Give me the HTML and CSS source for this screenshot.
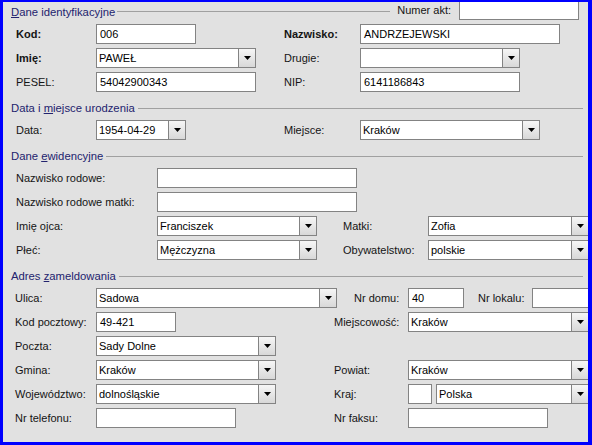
FILE: index.html
```html
<!DOCTYPE html>
<html>
<head>
<meta charset="utf-8">
<link rel="stylesheet" href="styles.css">
</head>
<body>
<div class="frame">
  <div class="head first">
    <span class="legend"><u>D</u>ane identyfikacyjne</span><span class="rule"></span>
    <span class="lbl akt">Numer akt:</span><div class="box w120"></div>
  </div>
  <div class="grid g1">
    <span class="lbl b">Kod:</span><div class="box w100">006</div>
    <span class="lbl b">Nazwisko:</span><div class="box w200">ANDRZEJEWSKI</div>
    <span class="lbl b">Imię:</span><div class="combo w160"><span class="val">PAWEŁ</span><span class="btn"><svg width="7" height="4" viewBox="0 0 7 4"><polygon points="0,0 7,0 3.5,4" fill="#000"/></svg></span></div>
    <span class="lbl">Drugie:</span><div class="combo w160"><span class="val"></span><span class="btn"><svg width="7" height="4" viewBox="0 0 7 4"><polygon points="0,0 7,0 3.5,4" fill="#000"/></svg></span></div>
    <span class="lbl">PESEL:</span><div class="box w160">54042900343</div>
    <span class="lbl">NIP:</span><div class="box w160">6141186843</div>
  </div>

  <div class="head">
    <span class="legend">Data i <u>m</u>iejsce urodzenia</span><span class="rule"></span>
  </div>
  <div class="grid g1">
    <span class="lbl">Data:</span><div class="combo w90"><span class="val">1954-04-29</span><span class="btn"><svg width="7" height="4" viewBox="0 0 7 4"><polygon points="0,0 7,0 3.5,4" fill="#000"/></svg></span></div>
    <span class="lbl">Miejsce:</span><div class="combo w180"><span class="val">Kraków</span><span class="btn"><svg width="7" height="4" viewBox="0 0 7 4"><polygon points="0,0 7,0 3.5,4" fill="#000"/></svg></span></div>
  </div>

  <div class="head">
    <span class="legend">Dane <u>e</u>widencyjne</span><span class="rule"></span>
  </div>
  <div class="grid g3">
    <span class="lbl">Nazwisko rodowe:</span><div class="box w200"></div><span></span><span></span>
    <span class="lbl">Nazwisko rodowe matki:</span><div class="box w200"></div><span></span><span></span>
    <span class="lbl">Imię ojca:</span><div class="combo w160"><span class="val">Franciszek</span><span class="btn"><svg width="7" height="4" viewBox="0 0 7 4"><polygon points="0,0 7,0 3.5,4" fill="#000"/></svg></span></div>
    <span class="lbl">Matki:</span><div class="combo w161"><span class="val">Zofia</span><span class="btn"><svg width="7" height="4" viewBox="0 0 7 4"><polygon points="0,0 7,0 3.5,4" fill="#000"/></svg></span></div>
    <span class="lbl">Płeć:</span><div class="combo w160"><span class="val">Mężczyzna</span><span class="btn"><svg width="7" height="4" viewBox="0 0 7 4"><polygon points="0,0 7,0 3.5,4" fill="#000"/></svg></span></div>
    <span class="lbl">Obywatelstwo:</span><div class="combo w161"><span class="val">polskie</span><span class="btn"><svg width="7" height="4" viewBox="0 0 7 4"><polygon points="0,0 7,0 3.5,4" fill="#000"/></svg></span></div>
  </div>

  <div class="head">
    <span class="legend">Adres <u>z</u>ameldowania</span><span class="rule"></span>
  </div>
  <div class="street">
    <span class="lbl l81">Ulica:</span><div class="combo w241"><span class="val">Sadowa</span><span class="btn"><svg width="7" height="4" viewBox="0 0 7 4"><polygon points="0,0 7,0 3.5,4" fill="#000"/></svg></span></div>
    <span class="lbl dom">Nr domu:</span><div class="box w56">40</div>
    <span class="lbl lok">Nr lokalu:</span><div class="box w62"></div>
  </div>
  <div class="grid g4">
    <span class="lbl">Kod pocztowy:</span><div class="box w80">49-421</div>
    <span class="lbl">Miejscowość:</span><div class="combo w181"><span class="val">Kraków</span><span class="btn"><svg width="7" height="4" viewBox="0 0 7 4"><polygon points="0,0 7,0 3.5,4" fill="#000"/></svg></span></div>
    <span class="lbl">Poczta:</span><div class="combo w180"><span class="val">Sady Dolne</span><span class="btn"><svg width="7" height="4" viewBox="0 0 7 4"><polygon points="0,0 7,0 3.5,4" fill="#000"/></svg></span></div>
    <span></span><span></span>
    <span class="lbl">Gmina:</span><div class="combo w180"><span class="val">Kraków</span><span class="btn"><svg width="7" height="4" viewBox="0 0 7 4"><polygon points="0,0 7,0 3.5,4" fill="#000"/></svg></span></div>
    <span class="lbl">Powiat:</span><div class="combo w181"><span class="val">Kraków</span><span class="btn"><svg width="7" height="4" viewBox="0 0 7 4"><polygon points="0,0 7,0 3.5,4" fill="#000"/></svg></span></div>
    <span class="lbl">Województwo:</span><div class="combo w180"><span class="val">dolnośląskie</span><span class="btn"><svg width="7" height="4" viewBox="0 0 7 4"><polygon points="0,0 7,0 3.5,4" fill="#000"/></svg></span></div>
    <span class="lbl">Kraj:</span>
    <div class="kraj"><div class="box w24"></div><div class="combo w153"><span class="val">Polska</span><span class="btn"><svg width="7" height="4" viewBox="0 0 7 4"><polygon points="0,0 7,0 3.5,4" fill="#000"/></svg></span></div></div>
    <span class="lbl">Nr telefonu:</span><div class="box w140"></div>
    <span class="lbl">Nr faksu:</span><div class="box w140"></div>
  </div>
</div>
</body>
</html>
```

FILE: styles.css
```css
html, body {
  margin: 0;
  padding: 0;
}
body {
  width: 592px;
  height: 445px;
  font-family: "Liberation Sans", Arial, sans-serif;
  font-size: 11px;
  color: #141414;
}
.frame {
  box-sizing: border-box;
  width: 592px;
  height: 445px;
  border-style: solid;
  border-color: #0000ff;
  border-width: 2px 4px 3px 3px;
  background: #e1e1e1;
  overflow: hidden;
}
.head {
  display: flex;
  align-items: center;
  height: 16px;
  margin-top: 8px;
  padding-left: 8px;
  padding-right: 5px;
}
.head.first {
  height: 20px;
  margin-top: -2px;
  padding-right: 9px;
}
.head.first .legend,
.head.first .rule {
  margin-top: 3px;
}
.legend {
  color: #23236e;
  white-space: nowrap;
  font-size: 11.3px;
}
.legend u {
  text-decoration-thickness: 1px;
  text-underline-offset: 1px;
}
.rule {
  flex: 1;
  height: 0;
  border-top: 1px solid #a0a0a0;
  margin-left: 3px;
}
.head.first .rule {
  margin-left: 2px;
}
.akt {
  margin-left: 7px;
  margin-right: 8px;
}
.lbl {
  white-space: nowrap;
  align-self: center;
  flex-shrink: 0;
}
.lbl.b {
  font-weight: bold;
}
.grid {
  display: grid;
  grid-auto-rows: 20px;
  row-gap: 4px;
  margin-top: 4px;
  padding-left: 13px;
  align-items: center;
}
.g1 {
  grid-template-columns: 80px 188px 76px 1fr;
}
.g3 {
  grid-template-columns: 141px 186px 85px 1fr;
}
.g4 {
  grid-template-columns: 81px 238px 74px 1fr;
  padding-left: 12px;
}
.street {
  display: flex;
  align-items: center;
  height: 20px;
  margin-top: 4px;
  padding-left: 12px;
}
.l81 {
  width: 81px;
}
.dom {
  margin-left: 17px;
  width: 54px;
}
.lok {
  margin-left: 14px;
  width: 54px;
}
.box, .combo {
  box-sizing: border-box;
  height: 20px;
  border: 1px solid #838383;
  background: #ffffff;
  color: #000;
  line-height: 18px;
  white-space: nowrap;
  overflow: hidden;
  flex-shrink: 0;
}
.box {
  padding: 0 3px;
}
.combo {
  display: flex;
}
.val {
  flex: 1;
  padding-left: 2px;
  overflow: hidden;
}
.btn {
  flex: 0 0 16px;
  border-left: 1px solid #838383;
  background: linear-gradient(#f6f6f6, #d8d8d8);
  display: flex;
  align-items: center;
  justify-content: center;
}
.kraj {
  display: flex;
  gap: 4px;
}
.w24 { width: 24px; }
.w56 { width: 56px; }
.w62 { width: 62px; }
.w80 { width: 80px; }
.w90 { width: 90px; }
.w100 { width: 100px; }
.w120 { width: 120px; }
.w140 { width: 140px; }
.w153 { width: 153px; }
.w160 { width: 160px; }
.w161 { width: 161px; }
.w180 { width: 180px; }
.w181 { width: 181px; }
.w200 { width: 200px; }
.w241 { width: 241px; }
```
